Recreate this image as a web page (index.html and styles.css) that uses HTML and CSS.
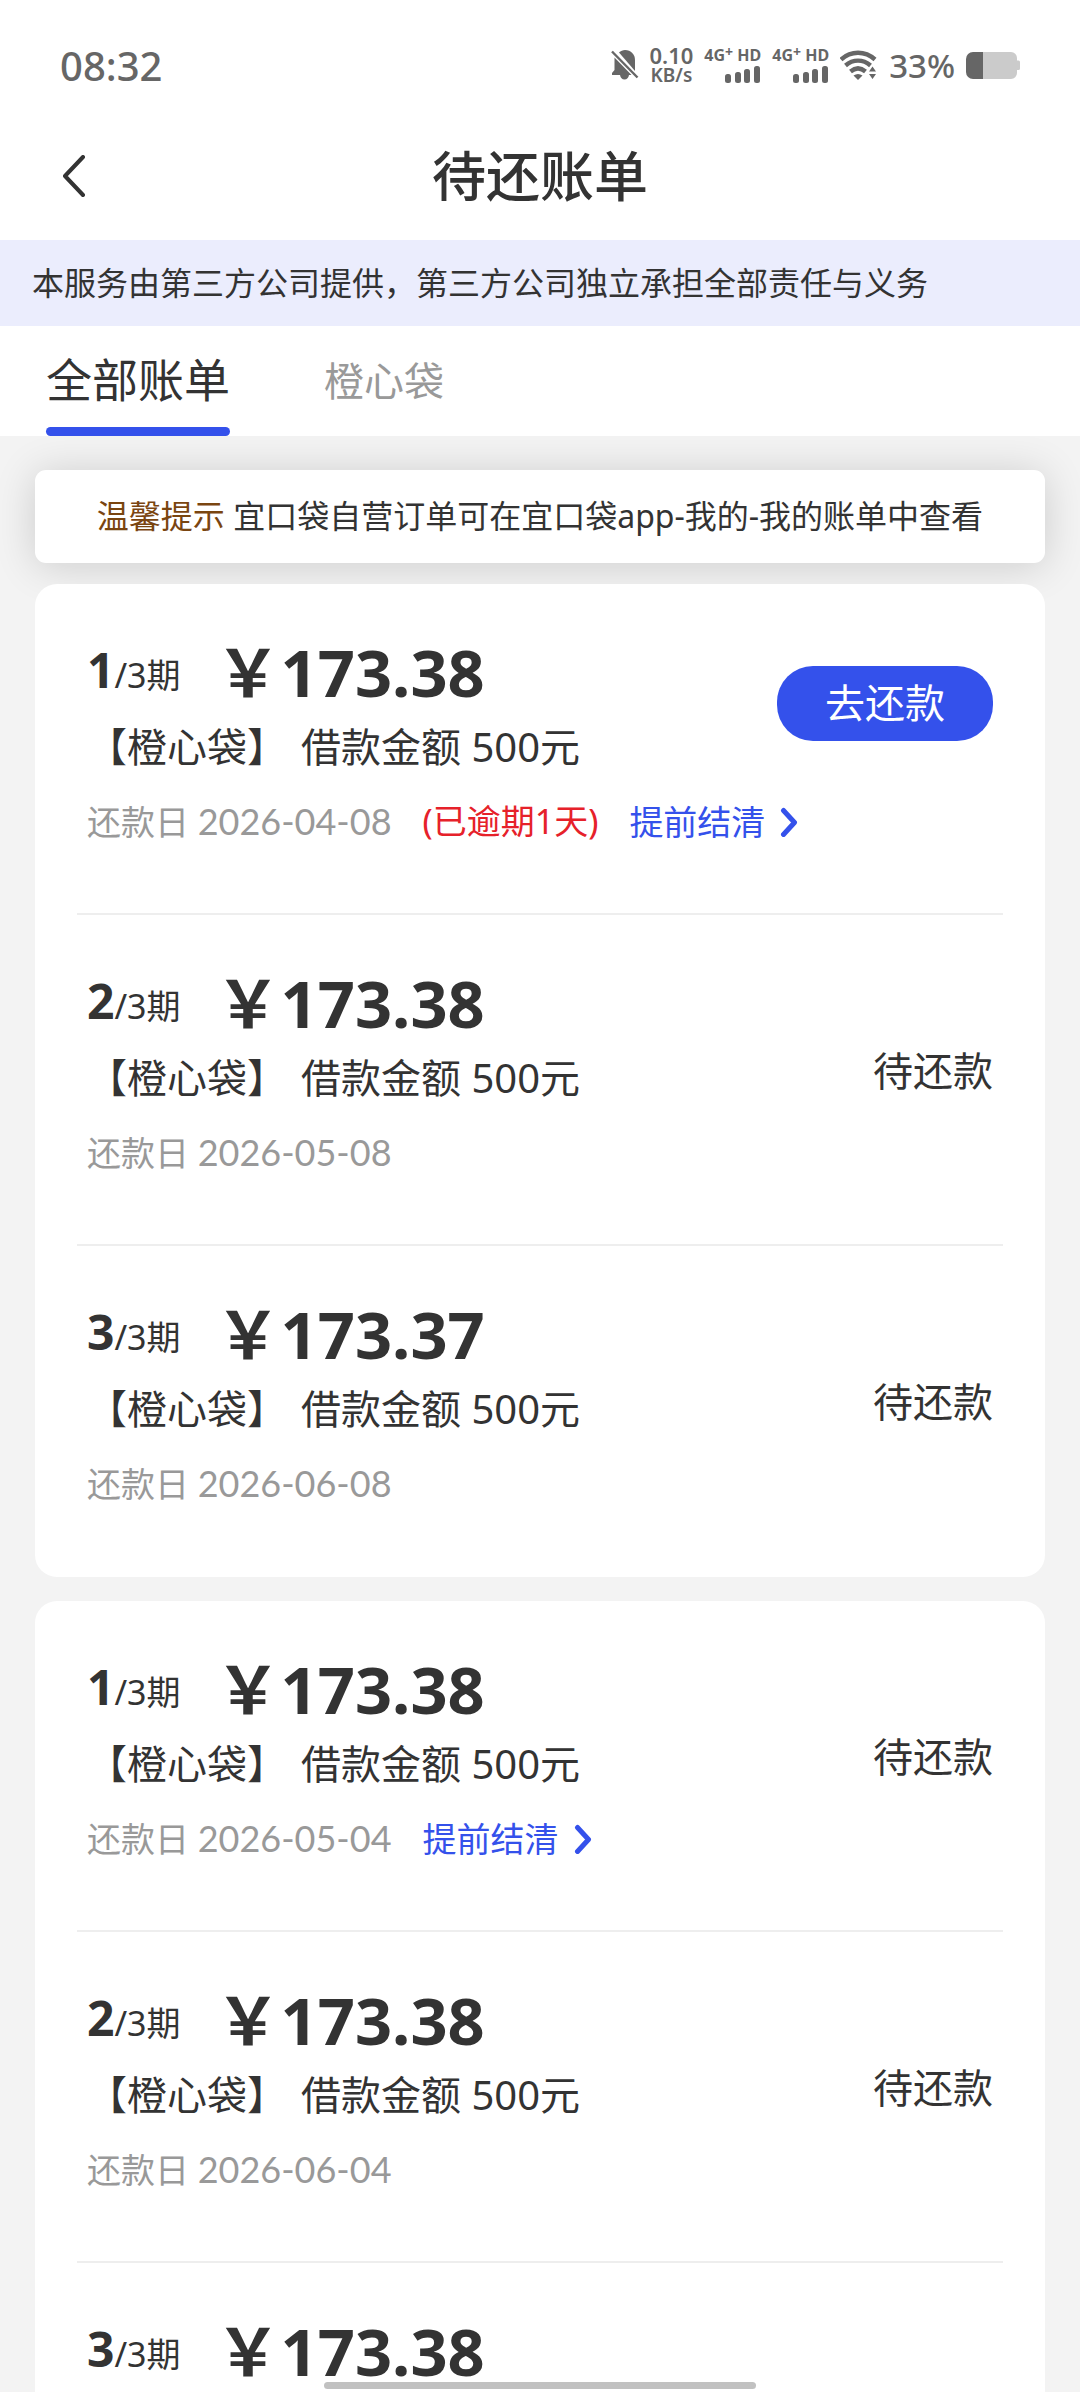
FILE: index.html
```html
<!DOCTYPE html>
<html lang="zh-CN">
<head>
    <meta charset="UTF-8">
    <meta name="viewport" content="width=device-width, initial-scale=1.0">
    <title>待还账单</title>
    <link rel="stylesheet" href="styles.css">
</head>
<body>
    <div class="status-bar">
        <span class="time">08:32</span>
        <div class="status-icons">
            <svg class="icon-bell" width="28" height="32" viewBox="0 0 28 32" fill="#666">
                <path d="M8 3.5C9.500 2 12 1 14 1c6 0 10 4.500 10 10v11z"/>
                <path d="M3.500 8.500L20.500 26H18c-.6 2.800-2 4.500-4.500 4.500S9.600 28.800 9 26H1v-2l2.500-3z"/>
                <path d="M1 2.500L26.500 28.500" stroke="#666" stroke-width="2.400" fill="none"/>
            </svg>
            <div class="speed"><b>0.10</b><span>KB/s</span></div>
            <div class="signal">
                <span>4G<sup>+</sup> HD</span>
                <svg width="36" height="17" viewBox="0 0 36 17" fill="#666">
                    <rect x="0" y="8" width="6" height="9" rx="2.500"/>
                    <rect x="10" y="6" width="6" height="11" rx="2.500"/>
                    <rect x="19" y="3" width="6" height="14" rx="2.500"/>
                    <rect x="29" y="0" width="6" height="17" rx="2.500"/>
                </svg>
            </div>
            <div class="signal">
                <span>4G<sup>+</sup> HD</span>
                <svg width="36" height="17" viewBox="0 0 36 17" fill="#666">
                    <rect x="0" y="8" width="6" height="9" rx="2.500"/>
                    <rect x="10" y="6" width="6" height="11" rx="2.500"/>
                    <rect x="19" y="3" width="6" height="14" rx="2.500"/>
                    <rect x="29" y="0" width="6" height="17" rx="2.500"/>
                </svg>
            </div>
            <svg class="icon-wifi" width="38" height="30" viewBox="0 0 38 30" fill="none" stroke="#666" stroke-width="4.400">
                <path d="M1 9.500C11 .5 25 .5 35 9.500"/>
                <path d="M5.500 15.500c7.500-6.500 17.500-6.500 25 0"/>
                <path d="M10.500 21.500c4.800-4 10.200-4 15 0"/>
                <path d="M13.500 25.500q4.500-3 9 0L18 30z" fill="#666" stroke="none"/>
                <path d="M29 21.500l3.500-5 3.500 5zM29 24h7l-3.500 5z" fill="#666" stroke="none"/>
            </svg>
            <span class="percent">33%</span>
            <svg class="icon-battery" width="54" height="27" viewBox="0 0 54 27">
                <path d="M7 0H45a6 6 0 0 1 6 6v2.500h1.500a1.500 1.500 0 0 1 1.500 1.500v6.500a1.500 1.500 0 0 1-1.500 1.500H51V21a6 6 0 0 1-6 6H7z" fill="#cbcbcb"/>
                <path d="M17 0H7a7 7 0 0 0-7 7v13a7 7 0 0 0 7 7h10z" fill="#666"/>
            </svg>
        </div>
    </div>

    <header class="header">
        <button class="button-back" aria-label="返回">
            <svg width="24" height="42" viewBox="0 0 24 42" fill="none" stroke="#333" stroke-width="4" stroke-linecap="round" stroke-linejoin="round">
                <path d="M21 2L3 21l18 19"/>
            </svg>
        </button>
        <h1>待还账单</h1>
    </header>

    <p class="notice">本服务由第三方公司提供，第三方公司独立承担全部责任与义务</p>

    <nav class="tabs">
        <a class="tab active" href="#all">全部账单</a>
        <a class="tab" href="#cxd">橙心袋</a>
    </nav>

    <main class="list" id="all">
        <p class="tip"><span>温馨提示</span> 宜口袋自营订单可在宜口袋app-我的-我的账单中查看</p>

        <section class="card">
            <div class="bill">
                <div class="bill-info">
                    <div class="bill-top">
                        <span class="period"><b>1</b>/3期</span>
                        <strong class="amount">￥173.38</strong>
                    </div>
                    <div class="bill-name"><span>【橙心袋】</span><span>借款金额 500元</span></div>
                    <div class="bill-date">
                        <span>还款日 <time>2026-04-08</time></span>
                        <span class="overdue">(已逾期1天)</span>
                        <a class="settle" href="#settle">提前结清
                            <svg width="18" height="30" viewBox="0 0 18 30" fill="none" stroke="#3451eb" stroke-width="5" stroke-linecap="round" stroke-linejoin="round"><path d="M3.500 3.500L14.500 15.500 3.500 27.500"/></svg>
                        </a>
                    </div>
                </div>
                <button class="button-pay">去还款</button>
            </div>
            <div class="bill">
                <div class="bill-info">
                    <div class="bill-top">
                        <span class="period"><b>2</b>/3期</span>
                        <strong class="amount">￥173.38</strong>
                    </div>
                    <div class="bill-name"><span>【橙心袋】</span><span>借款金额 500元</span></div>
                    <div class="bill-date"><span>还款日 <time>2026-05-08</time></span></div>
                </div>
                <span class="state">待还款</span>
            </div>
            <div class="bill">
                <div class="bill-info">
                    <div class="bill-top">
                        <span class="period"><b>3</b>/3期</span>
                        <strong class="amount">￥173.37</strong>
                    </div>
                    <div class="bill-name"><span>【橙心袋】</span><span>借款金额 500元</span></div>
                    <div class="bill-date"><span>还款日 <time>2026-06-08</time></span></div>
                </div>
                <span class="state">待还款</span>
            </div>
        </section>

        <section class="card">
            <div class="bill">
                <div class="bill-info">
                    <div class="bill-top">
                        <span class="period"><b>1</b>/3期</span>
                        <strong class="amount">￥173.38</strong>
                    </div>
                    <div class="bill-name"><span>【橙心袋】</span><span>借款金额 500元</span></div>
                    <div class="bill-date">
                        <span>还款日 <time>2026-05-04</time></span>
                        <a class="settle" href="#settle">提前结清
                            <svg width="18" height="30" viewBox="0 0 18 30" fill="none" stroke="#3451eb" stroke-width="5" stroke-linecap="round" stroke-linejoin="round"><path d="M3.500 3.500L14.500 15.500 3.500 27.500"/></svg>
                        </a>
                    </div>
                </div>
                <span class="state">待还款</span>
            </div>
            <div class="bill">
                <div class="bill-info">
                    <div class="bill-top">
                        <span class="period"><b>2</b>/3期</span>
                        <strong class="amount">￥173.38</strong>
                    </div>
                    <div class="bill-name"><span>【橙心袋】</span><span>借款金额 500元</span></div>
                    <div class="bill-date"><span>还款日 <time>2026-06-04</time></span></div>
                </div>
                <span class="state">待还款</span>
            </div>
            <div class="bill">
                <div class="bill-info">
                    <div class="bill-top">
                        <span class="period"><b>3</b>/3期</span>
                        <strong class="amount">￥173.38</strong>
                    </div>
                </div>
            </div>
        </section>
    </main>

    <div class="home-indicator"></div>
</body>
</html>
```
FILE: styles.css
```css
* { box-sizing: border-box; }

body {
    margin: 0;
    height: 100vh;
    display: flex;
    flex-direction: column;
    overflow: hidden;
    background-color: #fff;
    color: #333;
    font-family: "Noto Sans", "Noto Sans CJK SC", sans-serif;
}
a { text-decoration: none; }
h1, p { margin: 0; }
svg { display: block; flex: none; }
button {
    border: none;
    padding: 0;
    font-family: inherit;
    cursor: pointer;
}

/* status bar */
.status-bar {
    flex: none;
    display: flex;
    align-items: center;
    justify-content: space-between;
    height: 112px;
    padding: 18px 60px 0;
    color: #666;
}
.time {
    font-size: 40px;
    font-weight: 500;
}
.status-icons {
    display: flex;
    align-items: center;
    gap: 11px;
}
.speed {
    display: flex;
    flex-direction: column;
    align-items: center;
    line-height: 20px;
    font-size: 19px;
    font-weight: 600;
}
.speed b {
    font-size: 22px;
    font-weight: 600;
}
.signal {
    display: flex;
    flex-direction: column;
    align-items: flex-end;
    gap: 3px;
    font-size: 16px;
    font-weight: 700;
    line-height: 16px;
}
.signal sup {
    font-size: 14px;
    line-height: 0;
    vertical-align: 4px;
}
.percent {
    font-size: 33px;
    font-weight: 500;
}

/* header */
.header {
    flex: none;
    display: grid;
    grid-template-columns: 1fr auto 1fr;
    align-items: center;
    height: 128px;
    padding: 0 62px;
}
.header h1 {
    padding-bottom: 6px;
    font-size: 54px;
    font-weight: 500;
}
.button-back {
    justify-self: start;
    background: none;
}

.notice {
    flex: none;
    padding: 19px 32px;
    background-color: #ebedfd;
    font-size: 32px;
    line-height: 48px;
}

/* tabs */
.tabs {
    flex: none;
    display: flex;
    gap: 94px;
    height: 110px;
    padding: 0 46px;
}
.tab {
    padding-top: 4px;
    color: #999;
    font-size: 40px;
    line-height: 102px;
}
.tab.active {
    position: relative;
    color: #333;
    font-size: 46px;
    line-height: 98px;
}
.tab.active::after {
    content: "";
    position: absolute;
    left: 0;
    right: 0;
    bottom: 0;
    height: 9px;
    border-radius: 5px;
    background-color: #3451eb;
}

/* bills */
.list {
    flex: 1;
    min-height: 0;
    overflow-y: auto;
    scrollbar-width: none;
    padding: 34px 35px 60px;
    background-color: #f3f3f3;
}
.tip {
    margin-bottom: 21px;
    padding: 21px 0 23px;
    border-radius: 11px;
    background-color: #fff;
    box-shadow: 0 3px 42px rgba(0, 0, 0, 0.16);
    font-size: 32px;
    line-height: 49px;
    text-align: center;
}
.tip span { color: #7a4510; }
.card {
    position: relative;
    margin-bottom: 24px;
    padding: 0 42px;
    border-radius: 22px;
    background-color: #fff;
}
.bill {
    display: flex;
    justify-content: space-between;
    min-height: 331px;
    padding: 48px 10px 0;
    border-bottom: 2px solid #eee;
    white-space: nowrap;
}
.bill:last-child { border-bottom-color: transparent; }
.bill-info {
    flex: 1;
    min-width: 0;
}
.bill-top {
    display: flex;
    align-items: center;
    gap: 35px;
    height: 80px;
    line-height: 80px;
}
.period { font-size: 34px; }
.period b { font-size: 48px; }
.amount {
    font-size: 65px;
    font-weight: 700;
}
.bill-name {
    display: flex;
    gap: 14px;
    font-size: 40px;
    line-height: 70px;
}
.bill-date {
    display: flex;
    gap: 31px;
    color: #999;
    font-family: Lato, "Noto Sans CJK SC", sans-serif;
    font-size: 34px;
    line-height: 78px;
}
.bill-date time { font-size: 36px; }
.overdue {
    color: #e6212a;
    font-family: "Noto Sans", "Noto Sans CJK SC", sans-serif;
}
.settle {
    display: flex;
    align-items: center;
    gap: 15px;
    color: #3451eb;
}
.button-pay {
    flex: none;
    width: 216px;
    height: 75px;
    margin-top: 34px;
    padding-bottom: 5px;
    border-radius: 36px;
    background-color: #3451eb;
    color: #fff;
    font-size: 40px;
}
.state {
    padding-top: 78px;
    font-size: 40px;
    line-height: 60px;
}

.home-indicator {
    position: fixed;
    left: 30%;
    right: 30%;
    bottom: 3px;
    height: 7px;
    border-radius: 4px;
    background-color: #c1c1c1;
}
```
